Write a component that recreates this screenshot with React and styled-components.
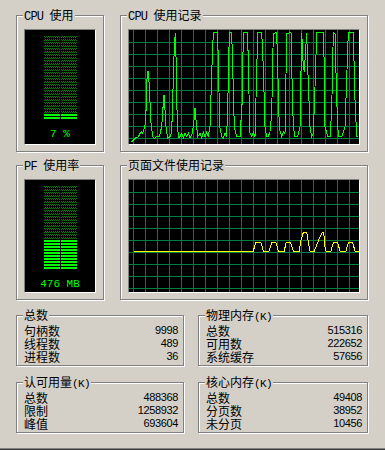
import React from 'react';
import styled, { createGlobalStyle } from 'styled-components';

const Global = createGlobalStyle`
  html, body { margin: 0; padding: 0; background: #d4d0c8; }
  body { font-family: "Noto Sans CJK SC", sans-serif; color: #000; }
`;

const Page = styled.div`
  width: 385px;
  height: 450px;
  box-sizing: border-box;
  background: #d4d0c8;
  padding: 15px 0 0 16px;
  border-bottom: 1px solid #404040;
  box-shadow: inset 0 -1px 0 #808080;
  display: flex;
  flex-direction: column;
`;

const GraphRow = styled.div`
  display: grid;
  grid-template-columns: 88px 248px;
  column-gap: 16px;
  height: ${p => p.$h}px;
  margin-top: ${p => p.$mt || 0}px;
`;

const StatRow = styled.div`
  display: grid;
  grid-template-columns: 168px 170px;
  column-gap: 14px;
  margin-top: ${p => p.$mt || 0}px;
`;

const Group = styled.div`
  position: relative;
  box-sizing: border-box;
  border: 1px solid #808080;
  box-shadow: inset 1px 1px 0 #fff, 1px 1px 0 #fff;
  padding: ${p => p.$pad || '13px 7px 6px 7px'};
  display: flex;
  flex-direction: column;
`;

const Legend = styled.div`
  position: absolute;
  top: -9px;
  left: ${p => p.$left || 6}px;
  padding: 0 1px;
  height: 15px;
  background: #d4d0c8;
  font-size: 12px;
  line-height: 15px;
  white-space: nowrap;
  font-family: "Noto Sans CJK SC", sans-serif;
`;

const Lat = styled.span`
  font-family: "Liberation Mono", monospace;
  font-size: ${p => p.$fs || 12}px;
  letter-spacing: ${p => p.$ls ?? -0.8}px;
`;

const Screen = styled.div`
  flex: 1;
  background: #000;
  border: 1px solid;
  border-color: #808080 #fff #fff #808080;
  display: flex;
  flex-direction: column;
  align-items: center;
  overflow: hidden;
`;

const MeterLabel = styled.div`
  margin-top: 9px;
  color: #00ff00;
  font-family: "Liberation Mono", monospace;
  font-size: 11px;
  line-height: 12px;
  white-space: pre;
`;

const Bars = styled.svg`
  display: block;
  margin-top: 6px;
`;

const Chart = styled.svg`
  display: block;
`;

const Row = styled.div`
  display: flex;
  justify-content: space-between;
  align-items: center;
  height: 13px;
`;

const Label = styled.span`
  font-family: "Noto Sans CJK SC", sans-serif;
  font-size: 12px;
  line-height: 13px;
`;

const Value = styled.span`
  font-family: "Liberation Sans", Arial, sans-serif;
  font-size: 11px;
  letter-spacing: -0.35px;
  line-height: 13px;
`;

function Meter({ id, lit, label }) {
  const rows = 28;
  const items = [];
  for (let i = 0; i < rows; i++) {
    const on = i >= rows - lit;
    const fill = on ? '#00ff00' : `url(#${id})`;
    items.push(<rect key={'a' + i} x={0} y={i * 3} width={16} height={2} fill={fill} />);
    items.push(<rect key={'b' + i} x={17} y={i * 3} width={16} height={2} fill={fill} />);
  }
  return (
    <Screen>
      <Bars width={33} height={83} shapeRendering="crispEdges">
        <defs>
          <pattern id={id} width="2" height="2" patternUnits="userSpaceOnUse">
            <rect x="0" y="0" width="1" height="1" fill="#008000" />
            <rect x="1" y="1" width="1" height="1" fill="#008000" />
          </pattern>
        </defs>
        {items}
      </Bars>
      <MeterLabel>{label}</MeterLabel>
    </Screen>
  );
}

function Graph({ raw, color, h }) {
  const w = 230;
  const pts = raw.map(([x, y]) => `${(x / 3 - 14).toFixed(1)},${(y / 3 - 30).toFixed(1)}`).join(' ');
  const lines = [];
  for (let x = 4.5; x < w; x += 12) lines.push(<line key={'v' + x} x1={x} y1={0} x2={x} y2={h} />);
  for (let y = 12.5; y < h; y += 12) lines.push(<line key={'h' + y} x1={0} y1={y} x2={w} y2={y} />);
  return (
    <Screen>
      <Chart width={w} height={h} shapeRendering="crispEdges">
        <g stroke="#008040" strokeWidth="1">{lines}</g>
        <polyline points={pts} fill="none" stroke={color} strokeWidth="1" />
      </Chart>
    </Screen>
  );
}

const cpuRaw = [[50,425],[60,415],[70,410],[78,395],[83,400],[88,385],[92,365],[95,260],[97,215],[100,215],[103,260],[108,370],[113,410],[118,415],[125,410],[133,410],[140,380],[145,310],[147,285],[150,330],[153,380],[158,415],[165,410],[170,395],[173,300],[178,140],[181,100],[184,200],[187,380],[192,415],[200,400],[205,415],[210,400],[215,410],[220,400],[225,415],[232,400],[237,360],[240,325],[243,360],[248,410],[255,400],[260,415],[265,395],[270,410],[275,395],[280,410],[285,380],[290,220],[295,98],[308,98],[310,200],[315,385],[320,410],[325,415],[330,400],[335,410],[340,250],[343,98],[350,98],[353,200],[358,380],[365,410],[375,410],[382,300],[385,98],[398,98],[400,200],[405,400],[410,410],[415,395],[420,410],[428,98],[440,98],[445,200],[450,380],[455,410],[460,410],[465,395],[470,340],[475,100],[485,98],[488,200],[493,385],[500,410],[505,395],[510,400],[515,100],[528,98],[530,200],[535,380],[540,410],[548,410],[555,380],[560,98],[565,200],[568,215],[575,98],[578,200],[585,380],[590,410],[595,400],[600,260],[605,98],[625,98],[628,200],[630,380],[638,410],[645,410],[650,330],[655,98],[660,100],[665,300],[670,410],[680,410],[690,380],[700,98],[715,98],[720,300],[725,410],[730,410]];

const pfRaw = [[57,303],[415,303],[422,278],[438,278],[445,303],[462,303],[470,278],[483,278],[490,303],[508,303],[513,278],[527,278],[535,303],[553,303],[558,270],[565,248],[575,248],[580,275],[585,303],[598,303],[605,285],[612,268],[618,255],[622,248],[626,248],[630,290],[633,303],[648,303],[655,278],[668,278],[675,303],[693,303],[700,278],[713,278],[720,303],[733,303]];

function Stats({ title, rows, left }) {
  return (
    <Group $pad="8px 5px 2px 7px">
      <Legend $left={left}>{title}</Legend>
      {rows.map(([l, v]) => (
        <Row key={l}>
          <Label>{l}</Label>
          <Value>{v}</Value>
        </Row>
      ))}
    </Group>
  );
}

const K = () => <Lat $fs={11} $ls={-0.6}>(K)</Lat>;

export default function App() {
  return (
    <>
      <Global />
      <Page>
        <GraphRow $h={137}>
          <Group>
            <Legend><Lat>CPU </Lat>使用</Legend>
            <Meter id="cpuPat" lit={2} label="7 %" />
          </Group>
          <Group>
            <Legend><Lat>CPU </Lat>使用记录</Legend>
            <Graph raw={cpuRaw} color="#00ff00" h={114} />
          </Group>
        </GraphRow>
        <GraphRow $h={135} $mt={13}>
          <Group>
            <Legend><Lat>PF </Lat>使用率</Legend>
            <Meter id="pfPat" lit={10} label="476 MB" />
          </Group>
          <Group>
            <Legend>页面文件使用记录</Legend>
            <Graph raw={pfRaw} color="#ffff00" h={112} />
          </Group>
        </GraphRow>
        <StatRow $mt={15}>
          <Stats title="总数" rows={[['句柄数', '9998'], ['线程数', '489'], ['进程数', '36']]} />
          <Stats title={<>物理内存<K /></>} rows={[['总数', '515316'], ['可用数', '222652'], ['系统缓存', '57656']]} />
        </StatRow>
        <StatRow $mt={16}>
          <Stats title={<>认可用量<K /></>} rows={[['总数', '488368'], ['限制', '1258932'], ['峰值', '693604']]} />
          <Stats title={<>核心内存<K /></>} rows={[['总数', '49408'], ['分页数', '38952'], ['未分页', '10456']]} />
        </StatRow>
      </Page>
    </>
  );
}
